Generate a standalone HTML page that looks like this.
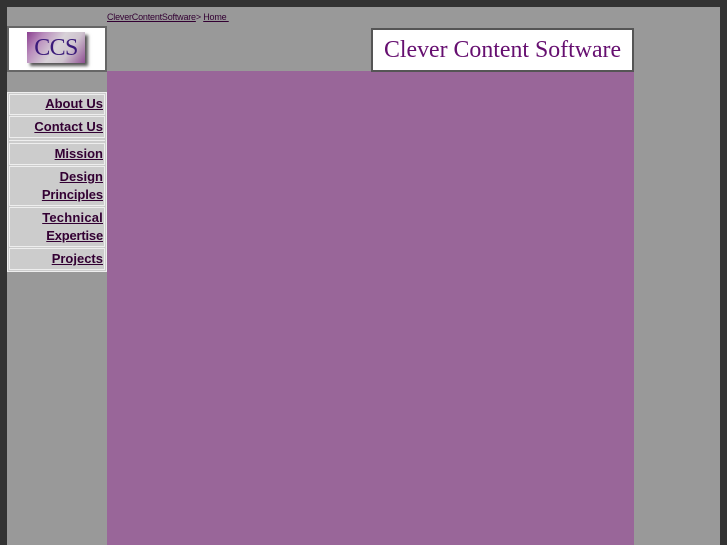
<!DOCTYPE html>
<html><head><meta charset="utf-8"><style>
html,body{margin:0;padding:0;background:#333;width:727px;height:545px;overflow:hidden}
div,a{position:absolute;box-sizing:border-box}
a{color:#330033}
#pg{left:7px;top:7px;width:713px;height:538px;background:#999}
#main{left:107px;top:71px;width:527px;height:474px;background:#996699}
#crumb{left:107px;top:12px;font:9px/10px "Liberation Sans",sans-serif;color:#330033;white-space:pre;letter-spacing:-.2px;filter:blur(.25px)}
#crumb a{position:static}
#logo{left:7px;top:26px;width:100px;height:46px;background:#fff;border:2px solid #666}
#tile{left:27px;top:32px;width:58px;height:31px;background:linear-gradient(125deg,#8a3f8f 0%,#b98cbc 22%,#d8d2d8 50%,#cfc4cf 70%,#8f4f93 100%);box-shadow:3px 3px 3px #555}
#ccs{left:27px;top:32px;width:58px;height:31px;text-align:center;font:24px/32px "Liberation Serif",serif;color:#3a1a7a;letter-spacing:-.6px;filter:blur(.3px)}
#ban{left:371px;top:28px;width:263px;height:44px;background:#fff;border:2px solid #555}
#bt{left:384px;top:35px;font:23.85px/30px "Liberation Serif",serif;color:#660f70;white-space:nowrap;filter:blur(.3px)}
#nav{left:7px;top:92px;width:100px;height:180px;background:#ccc;border:1px solid #eee}
.c{left:9px;width:96px;background:#ccc;border:1px solid #eee;text-align:right;font:bold 13px/18px "Liberation Sans",sans-serif;padding:0 1px 0 0;color:#330033;filter:blur(.2px)}
.c a{position:static}
.l{left:9px;width:96px;height:1px;background:#eee}
</style></head><body>
<div id="pg"></div>
<div id="main"></div>
<div id="crumb"><a href="#">CleverContentSoftware</a>&gt; <a href="#">Home </a></div>
<div id="logo"></div><div id="tile"></div><div id="ccs">CCS</div>
<div id="ban"></div><div id="bt">Clever Content Software</div>
<div id="nav"></div>
<div class="c" style="top:94px;height:21px"><a href="#">About Us</a></div>
<div class="c" style="top:116px;height:22px;padding-top:1px"><a href="#">Contact Us</a></div>
<div class="l" style="top:140px"></div>
<div class="c" style="top:143px;height:22px;padding-top:1px"><a href="#">Mission</a></div>
<div class="c" style="top:166px;height:40px;padding-top:1px"><a href="#">Design<br><span style="letter-spacing:-.1px">Principles</span></a></div>
<div class="c" style="top:207px;height:40px;padding-top:1px"><a href="#"><span style="letter-spacing:.2px">Technical</span><br><span style="letter-spacing:-.2px">Expertise</span></a></div>
<div class="c" style="top:248px;height:22px;padding-top:1px"><a href="#">Projects</a></div>
</body></html>
